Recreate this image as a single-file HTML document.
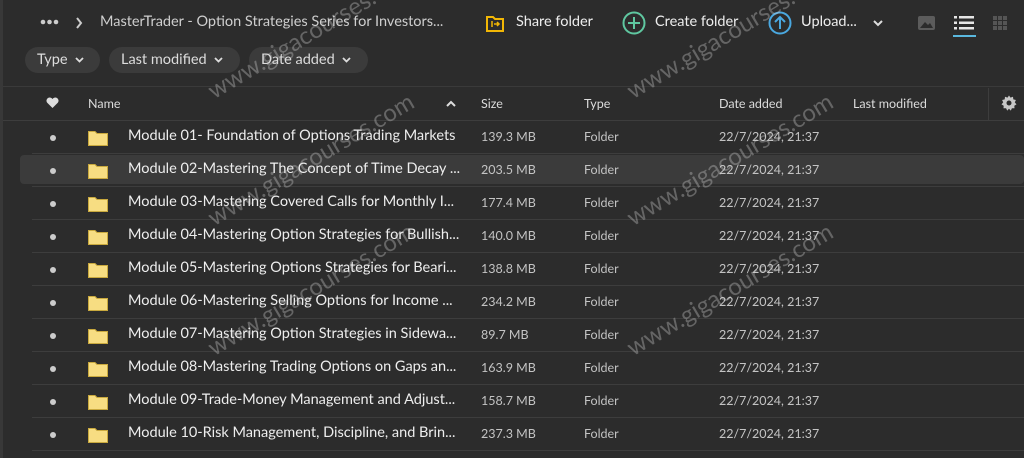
<!DOCTYPE html>
<html><head><meta charset="utf-8"><style>
*{margin:0;padding:0;box-sizing:border-box}
html{width:1024px;height:458px;overflow:hidden}
body{width:1024px;height:458px;overflow:hidden;background:#2c2c2c;font-family:"Lato","Liberation Sans",sans-serif;color:#ddd;position:relative}
.a{position:absolute;white-space:nowrap}
.pill{position:absolute;top:47px;height:26px;border-radius:13px;background:#3b3b3b;font-size:14.5px;color:#ddd;line-height:26px;padding-left:12px}
.pill svg{margin-left:7px;vertical-align:1px}
.hd{position:absolute;top:96px;font-size:12.5px;color:#ddd}
.row{position:absolute;left:0;width:1024px;height:33px}
.row .sep{position:absolute;left:32px;right:0;bottom:0;height:1px;background:#3d3d3d}
.dot{position:absolute;left:50px;top:14px;width:6px;height:6px;border-radius:50%;background:#ccc}
.fold{position:absolute;left:88px;top:9px;width:20px;height:16px}
.nm{position:absolute;left:128px;top:6px;font-size:14.5px;color:#eee}
.sz{position:absolute;left:481px;top:8px;font-size:12.5px;color:#c4c4c4}
.tp{position:absolute;left:584px;top:8px;font-size:12.5px;color:#c4c4c4}
.dt{position:absolute;left:719px;top:8px;font-size:12.5px;color:#c4c4c4}
.wm{position:absolute;font-size:24px;line-height:24px;color:#d8d8d8;opacity:.33;transform-origin:0 100%;transform:rotate(-30.7deg);white-space:nowrap}
</style></head><body>
<div class="a" style="left:0;top:0;width:3px;height:458px;background:#383838"></div>
<svg class="a" style="left:40px;top:19px" width="19" height="6"><circle cx="3" cy="3" r="2.3" fill="#ccc"/><circle cx="9.5" cy="3" r="2.3" fill="#ccc"/><circle cx="16" cy="3" r="2.3" fill="#ccc"/></svg>
<svg class="a" style="left:75px;top:17px" width="8" height="12"><path d="M2 1 L6 6 L2 11" stroke="#ccc" stroke-width="2" fill="none"/></svg>
<div class="a" style="left:100px;top:13px;font-size:14.5px;color:#cfcfcf">MasterTrader - Option Strategies Series for Investors...</div>
<svg class="a" style="left:485px;top:13px" width="20" height="20"><path d="M2 4 H8 L10 6 H18 V18 H2 Z" fill="none" stroke="#f2b705" stroke-width="2"/><path d="M7 8 V14 M9 11 H14 M12 9 L14 11 L12 13" stroke="#f2b705" stroke-width="1.5" fill="none"/></svg>
<div class="a" style="left:516px;top:13px;font-size:14.5px;color:#eee">Share folder</div>
<svg class="a" style="left:622px;top:11px" width="24" height="24"><circle cx="12" cy="12" r="10.5" fill="none" stroke="#5fc7a0" stroke-width="2"/><path d="M12 6 V18 M6 12 H18" stroke="#5fc7a0" stroke-width="2"/></svg>
<div class="a" style="left:655px;top:13px;font-size:14.5px;color:#eee">Create folder</div>
<svg class="a" style="left:768px;top:11px" width="24" height="24"><circle cx="12" cy="12" r="10.5" fill="none" stroke="#4aa8e0" stroke-width="2"/><path d="M12 18 V6 M7 11 L12 6 L17 11" stroke="#4aa8e0" stroke-width="2" fill="none"/></svg>
<div class="a" style="left:801px;top:13px;font-size:14.5px;color:#eee">Upload...</div>
<svg class="a" style="left:873px;top:19px" width="10" height="8"><path d="M1 2 L5 6 L9 2" stroke="#ddd" stroke-width="2" fill="none"/></svg>
<svg class="a" style="left:918px;top:16px" width="17" height="14"><rect x="0" y="0" width="17" height="14" rx="2" fill="#5c5c5c"/><path d="M2 12 L7 6 L10 9 L12 7 L15 12 Z" fill="#2c2c2c"/></svg>
<svg class="a" style="left:954px;top:16px" width="20" height="14"><g fill="#e6e6e6"><rect x="0" y="0" width="3" height="2.5"/><rect x="5" y="0" width="15" height="2.5"/><rect x="0" y="5.5" width="3" height="2.5"/><rect x="5" y="5.5" width="15" height="2.5"/><rect x="0" y="11" width="3" height="2.5"/><rect x="5" y="11" width="15" height="2.5"/></g></svg>
<div class="a" style="left:953px;top:35px;width:23px;height:2px;background:#5ab8de"></div>
<svg class="a" style="left:993px;top:16px" width="14" height="14"><g fill="#555"><rect x="0" y="0" width="4" height="4"/><rect x="5" y="0" width="4" height="4"/><rect x="10" y="0" width="4" height="4"/><rect x="0" y="5" width="4" height="4"/><rect x="5" y="5" width="4" height="4"/><rect x="10" y="5" width="4" height="4"/><rect x="0" y="10" width="4" height="4"/><rect x="5" y="10" width="4" height="4"/><rect x="10" y="10" width="4" height="4"/></g></svg>
<div class="pill" style="left:25px;width:75px">Type<svg width="9" height="6"><path d="M1 1 L4.5 4.5 L8 1" stroke="#ddd" stroke-width="1.8" fill="none"/></svg></div>
<div class="pill" style="left:109px;width:131px">Last modified<svg width="9" height="6"><path d="M1 1 L4.5 4.5 L8 1" stroke="#ddd" stroke-width="1.8" fill="none"/></svg></div>
<div class="pill" style="left:249px;width:119px">Date added<svg width="9" height="6"><path d="M1 1 L4.5 4.5 L8 1" stroke="#ddd" stroke-width="1.8" fill="none"/></svg></div>
<div class="a" style="left:3px;top:86px;width:1021px;height:1px;background:#3a3a3a"></div>
<svg class="a" style="left:46px;top:97px" width="13" height="12"><path d="M6.5 11 L1 5.5 A3 3 0 0 1 6.5 2 A3 3 0 0 1 12 5.5 Z" fill="#ddd"/></svg>
<div class="hd" style="left:88px">Name</div>
<svg class="a" style="left:446px;top:100px" width="10" height="7"><path d="M1 6 L5 2 L9 6" stroke="#ddd" stroke-width="2" fill="none"/></svg>
<div class="hd" style="left:481px">Size</div>
<div class="hd" style="left:584px">Type</div>
<div class="hd" style="left:719px">Date added</div>
<div class="hd" style="left:853px">Last modified</div>
<div class="a" style="left:988px;top:88px;width:1px;height:32px;background:#3d3d3d"></div>
<svg class="a" style="left:1001px;top:95px" width="16" height="16" viewBox="0 0 16 16"><path d="M8 0.5 L9.5 2.6 L12 1.8 L12.3 4.4 L14.9 5 L13.8 7.4 L15.5 9.4 L13.3 10.7 L13.5 13.3 L10.9 13.2 L9.8 15.6 L8 13.8 L6.2 15.6 L5.1 13.2 L2.5 13.3 L2.7 10.7 L0.5 9.4 L2.2 7.4 L1.1 5 L3.7 4.4 L4 1.8 L6.5 2.6 Z" fill="#c8c8c8"/><circle cx="8" cy="8" r="2.5" fill="#2c2c2c"/></svg>
<div class="a" style="left:3px;top:120px;width:1021px;height:1px;background:#3d3d3d"></div>
<div class="a" style="left:20px;top:155px;width:1004px;height:29px;border-radius:4px;background:#3b3b3b"></div>

<div class="row" style="top:121px"><div class="dot"></div><svg class="fold" viewBox="0 0 20 16"><path d="M0.5 1.5 H7 L9 3.5 H19.5 V15.5 H0.5 Z" fill="#f7dd82" stroke="#c9a93e"/></svg><div class="nm">Module 01- Foundation of Options Trading Markets</div><div class="sz">139.3 MB</div><div class="tp">Folder</div><div class="dt">22/7/2024, 21:37</div><div class="sep"></div></div>
<div class="row" style="top:154px"><div class="dot"></div><svg class="fold" viewBox="0 0 20 16"><path d="M0.5 1.5 H7 L9 3.5 H19.5 V15.5 H0.5 Z" fill="#f7dd82" stroke="#c9a93e"/></svg><div class="nm">Module 02-Mastering The Concept of Time Decay ...</div><div class="sz">203.5 MB</div><div class="tp">Folder</div><div class="dt">22/7/2024, 21:37</div><div class="sep"></div></div>
<div class="row" style="top:187px"><div class="dot"></div><svg class="fold" viewBox="0 0 20 16"><path d="M0.5 1.5 H7 L9 3.5 H19.5 V15.5 H0.5 Z" fill="#f7dd82" stroke="#c9a93e"/></svg><div class="nm">Module 03-Mastering Covered Calls for Monthly I...</div><div class="sz">177.4 MB</div><div class="tp">Folder</div><div class="dt">22/7/2024, 21:37</div><div class="sep"></div></div>
<div class="row" style="top:220px"><div class="dot"></div><svg class="fold" viewBox="0 0 20 16"><path d="M0.5 1.5 H7 L9 3.5 H19.5 V15.5 H0.5 Z" fill="#f7dd82" stroke="#c9a93e"/></svg><div class="nm">Module 04-Mastering Option Strategies for Bullish...</div><div class="sz">140.0 MB</div><div class="tp">Folder</div><div class="dt">22/7/2024, 21:37</div><div class="sep"></div></div>
<div class="row" style="top:253px"><div class="dot"></div><svg class="fold" viewBox="0 0 20 16"><path d="M0.5 1.5 H7 L9 3.5 H19.5 V15.5 H0.5 Z" fill="#f7dd82" stroke="#c9a93e"/></svg><div class="nm">Module 05-Mastering Options Strategies for Beari...</div><div class="sz">138.8 MB</div><div class="tp">Folder</div><div class="dt">22/7/2024, 21:37</div><div class="sep"></div></div>
<div class="row" style="top:286px"><div class="dot"></div><svg class="fold" viewBox="0 0 20 16"><path d="M0.5 1.5 H7 L9 3.5 H19.5 V15.5 H0.5 Z" fill="#f7dd82" stroke="#c9a93e"/></svg><div class="nm">Module 06-Mastering Selling Options for Income ...</div><div class="sz">234.2 MB</div><div class="tp">Folder</div><div class="dt">22/7/2024, 21:37</div><div class="sep"></div></div>
<div class="row" style="top:319px"><div class="dot"></div><svg class="fold" viewBox="0 0 20 16"><path d="M0.5 1.5 H7 L9 3.5 H19.5 V15.5 H0.5 Z" fill="#f7dd82" stroke="#c9a93e"/></svg><div class="nm">Module 07-Mastering Option Strategies in Sidewa...</div><div class="sz">89.7 MB</div><div class="tp">Folder</div><div class="dt">22/7/2024, 21:37</div><div class="sep"></div></div>
<div class="row" style="top:352px"><div class="dot"></div><svg class="fold" viewBox="0 0 20 16"><path d="M0.5 1.5 H7 L9 3.5 H19.5 V15.5 H0.5 Z" fill="#f7dd82" stroke="#c9a93e"/></svg><div class="nm">Module 08-Mastering Trading Options on Gaps an...</div><div class="sz">163.9 MB</div><div class="tp">Folder</div><div class="dt">22/7/2024, 21:37</div><div class="sep"></div></div>
<div class="row" style="top:385px"><div class="dot"></div><svg class="fold" viewBox="0 0 20 16"><path d="M0.5 1.5 H7 L9 3.5 H19.5 V15.5 H0.5 Z" fill="#f7dd82" stroke="#c9a93e"/></svg><div class="nm">Module 09-Trade-Money Management and Adjust...</div><div class="sz">158.7 MB</div><div class="tp">Folder</div><div class="dt">22/7/2024, 21:37</div><div class="sep"></div></div>
<div class="row" style="top:418px"><div class="dot"></div><svg class="fold" viewBox="0 0 20 16"><path d="M0.5 1.5 H7 L9 3.5 H19.5 V15.5 H0.5 Z" fill="#f7dd82" stroke="#c9a93e"/></svg><div class="nm">Module 10-Risk Management, Discipline, and Brin...</div><div class="sz">237.3 MB</div><div class="tp">Folder</div><div class="dt">22/7/2024, 21:37</div><div class="sep"></div></div>

<div class="wm" style="left:216px;top:-49px">www.gigacourses.com</div>
<div class="wm" style="left:216px;top:79px">www.gigacourses.com</div>
<div class="wm" style="left:216px;top:206px">www.gigacourses.com</div>
<div class="wm" style="left:216px;top:336px">www.gigacourses.com</div>
<div class="wm" style="left:635px;top:-49px">www.gigacourses.com</div>
<div class="wm" style="left:635px;top:79px">www.gigacourses.com</div>
<div class="wm" style="left:635px;top:206px">www.gigacourses.com</div>
<div class="wm" style="left:635px;top:336px">www.gigacourses.com</div>
</body></html>
